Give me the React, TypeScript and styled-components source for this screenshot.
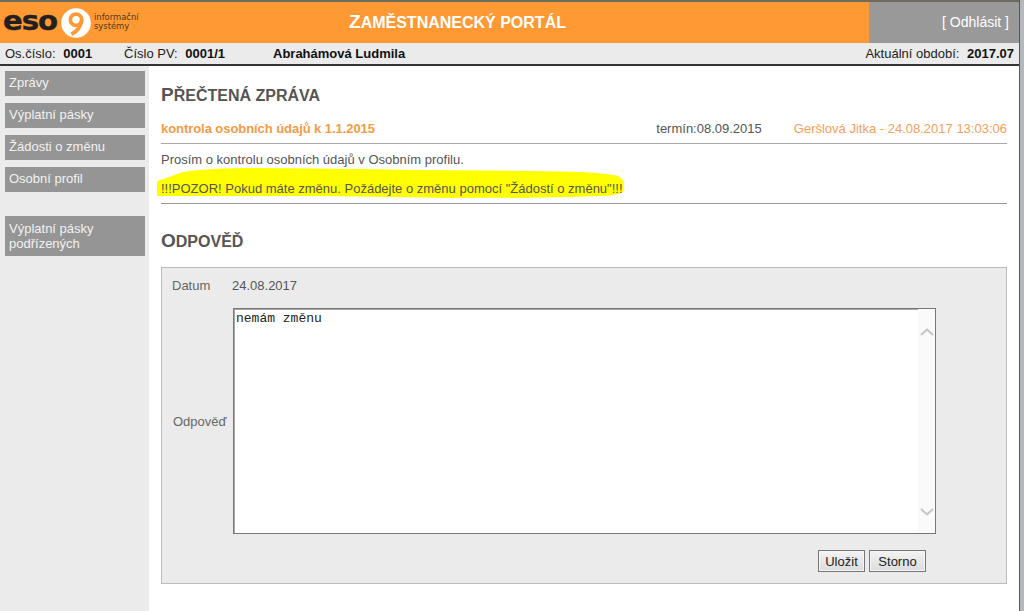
import React from "react";
import styled, { createGlobalStyle } from "styled-components";

const Global = createGlobalStyle`
  html, body { margin: 0; padding: 0; background: #fff; }
  body { font-family: "Liberation Sans", Arial, sans-serif; font-size: 13px; color: #555; }
  #root { width: 1024px; height: 611px; overflow: hidden; }
`;

const Page = styled.div`
  width: 1024px; height: 611px; display: flex; flex-direction: column;
  background: #b4b8bc; box-sizing: border-box; padding-right: 4px;
`;
const Frame = styled.div`
  flex: 1; display: flex; flex-direction: column; min-height: 0;
  border-right: 1px solid #555;
`;
const TopBar = styled.header`
  height: 41px; display: flex; border-top: 2px solid #6e6a5e; flex: none;
`;
const Brand = styled.div`
  flex: 1; background: #ff9933; display: flex; align-items: center; position: relative; min-width: 0;
`;
const LogoWord = styled.span`
  font-family: "DejaVu Sans", sans-serif; font-weight: 700; font-size: 27px; letter-spacing: -1px;
  color: #231f20; margin-left: 3px; line-height: 41px; width: 53px; flex: none; -webkit-text-stroke: 0.4px #231f20;
  transform: scaleX(1.08) translateY(-2px); transform-origin: left center;
`;
const LogoMark = styled.svg`
  width: 30px; height: 30px; margin-left: 5px; flex: none;
`;
const LogoSub = styled.span`
  font-family: "DejaVu Sans", sans-serif; font-size: 8.4px; line-height: 8.5px; color: #4a3a1c; margin-left: 3px;
  display: flex; flex-direction: column; margin-top: -2px; position: relative; z-index: 1;
`;
const PortalTitle = styled.div`
  position: absolute; left: 0; right: 0; top: 0; text-align: center; padding-left: 46px;
  font-size: 16px; font-weight: 700; text-transform: uppercase; line-height: 40px; color: #fff;
  &::first-letter { font-size: 19px; }
`;
const LogoutBox = styled.div`
  width: 150px; background: #999; color: #fff; font-size: 14px; display: flex; justify-content: flex-end;
  align-items: center; padding-right: 10px; box-sizing: border-box; padding-bottom: 2px;
`;
const InfoBar = styled.div`
  height: 23px; flex: none; box-sizing: border-box; background: #ebebeb; border-bottom: 2px solid #333;
  display: flex; align-items: center; color: #222; padding: 0 5px; font-size: 13px;
`;
const InfoItem = styled.span<{ $w?: number }>`
  ${p => (p.$w ? `width: ${p.$w}px;` : "")} flex: none; white-space: nowrap;
  b { color: #111; margin-left: 4px; }
`;
const InfoName = styled.b`
  color: #111; flex: 1;
`;
const Body = styled.div`
  flex: 1; display: flex; min-height: 0;
`;
const Side = styled.nav`
  width: 149px; flex: none; background: #ebebeb; padding-top: 5px; box-sizing: border-box;
  display: flex; flex-direction: column; gap: 7px;
`;
const MenuItem = styled.a<{ $gap?: boolean }>`
  display: block; width: 140px; margin-left: 5px; box-sizing: border-box; padding: 4px 4px;
  min-height: 25px; background: #959595; color: #f2f2f2; font-size: 13px; line-height: 15px;
  ${p => (p.$gap ? "margin-top: 17px; padding: 5px 4px 5px;" : "")}
`;
const Main = styled.main`
  flex: 1; background: #fff; padding: 0 12px; min-width: 0; display: flex; flex-direction: column;
`;
const Title = styled.h2<{ $top?: number }>`
  margin: ${p => p.$top ?? 18}px 0 0; font-size: 16px; line-height: 22px; font-weight: 700;
  text-transform: uppercase; color: #555;
  &::first-letter { font-size: 19px; }
`;
const MessageHead = styled.div`
  display: flex; margin-top: 12px; height: 24px; align-items: flex-start; border-bottom: 1px solid #aaa;
  line-height: 20px;
`;
const Subject = styled.b`
  color: #f59a45; flex: 1; letter-spacing: -0.06px;
`;
const Due = styled.span`
  color: #555; margin-right: 32px;
`;
const Author = styled.span`
  color: #f7a058;
`;
const MessageText = styled.div`
  position: relative; border-bottom: 1px solid #999; height: 59px; color: #555;
`;
const Highlight = styled.svg`
  position: absolute; left: -5px; top: 23px; width: 470px; height: 32px;
`;
const Para = styled.p<{ $top: number }>`
  position: relative; margin: ${p => p.$top}px 0 0; line-height: 15px;
`;
const Panel = styled.section`
  margin-top: 14px; height: 317px; box-sizing: border-box; background: #ebebeb; border: 1px solid #bbb;
  padding: 10px 10px 0 10px; position: relative; display: flex; flex-direction: column;
`;
const DateRow = styled.div`
  display: flex; line-height: 16px; color: #555;
`;
const RowLabel = styled.span`
  width: 60px; flex: none; color: #666;
`;
const AnswerRow = styled.div`
  display: flex; align-items: center; margin-top: 14px;
`;
const AnswerLabel = styled(RowLabel)`
  width: 61px; padding-left: 1px; box-sizing: border-box;
`;
const Area = styled.div`
  width: 703px; height: 226px; box-sizing: border-box; border: 1px solid #777;
  background: #fff; display: flex; justify-content: space-between; box-shadow: inset 1px 1px 0 #aaa;
`;
const AreaText = styled.div`
  font-family: "Liberation Mono", monospace; font-size: 13px; color: #222; padding: 2px 2px;
`;
const Scroll = styled.div`
  width: 17px; background: #fafafa; display: flex; flex-direction: column; justify-content: space-between;
  align-items: center; padding: 19px 0 17px;
  color: #c4c4c4;
`;
const Actions = styled.div`
  display: flex; justify-content: flex-end; gap: 4px; margin-top: 16px; padding-right: 70px;
`;
const Btn = styled.button<{ $w: number }>`
  width: ${p => p.$w}px; height: 22px; padding: 0; font: 13px "Liberation Sans", Arial, sans-serif; color: #222;
  background: linear-gradient(#f3f3f3, #dcdcdc); border: 1px solid #777; box-shadow: inset 0 0 0 1px #f6f6f6;
`;
const Chevron = ({ up }: { up?: boolean }) => (
  <svg width="14" height="8" viewBox="0 0 14 8" fill="none" stroke="currentColor" strokeWidth="2">
    <path d={up ? "M1 7 L7 1.5 L13 7" : "M1 1 L7 6.5 L13 1"} />
  </svg>
);

export default function App() {
  return (
    <Page>
      <Global />
      <Frame>
        <TopBar>
          <Brand>
            <LogoWord>eso</LogoWord>
            <LogoMark viewBox="0 0 32 32">
              <circle cx="16" cy="16" r="15.8" fill="#fff" />
              <path d="M11 28 C15 26 21 21 22 13" fill="none" stroke="#ff9933" strokeWidth="4" />
              <circle cx="16" cy="12.5" r="6" fill="none" stroke="#ff9933" strokeWidth="4" />
            </LogoMark>
            <LogoSub><span>informační</span><span>systémy</span></LogoSub>
            <PortalTitle>Zaměstnanecký portál</PortalTitle>
          </Brand>
          <LogoutBox>[ Odhlásit ]</LogoutBox>
        </TopBar>
        <InfoBar>
          <InfoItem $w={119}>Os.číslo: <b>0001</b></InfoItem>
          <InfoItem $w={149}>Číslo PV: <b>0001/1</b></InfoItem>
          <InfoName>Abrahámová Ludmila</InfoName>
          <InfoItem>Aktuální období: <b>2017.07</b></InfoItem>
        </InfoBar>
        <Body>
          <Side>
            <MenuItem>Zprávy</MenuItem>
            <MenuItem>Výplatní pásky</MenuItem>
            <MenuItem>Žádosti o změnu</MenuItem>
            <MenuItem>Osobní profil</MenuItem>
            <MenuItem $gap>Výplatní pásky podřízených</MenuItem>
          </Side>
          <Main>
            <Title>Přečtená zpráva</Title>
            <MessageHead>
              <Subject>kontrola osobních údajů k 1.1.2015</Subject>
              <Due>termín:08.09.2015</Due>
              <Author>Geršlová Jitka - 24.08.2017 13:03:06</Author>
            </MessageHead>
            <MessageText>
              <Highlight viewBox="0 0 470 32">
                <path
                  d="M1 29 L1 15 C2 13 4 13 8 12 C16 9 24 5 34 4 C50 2 72 1 94 1 C150 1 205 2 261 3 C316 3 372 4 427 5 C440 6 455 7 462 9 C465 11 467 13 468 15 L467 25 C462 28 452 29 444 29 C395 31 344 31 294 31 C244 30 194 29 144 29 L3 29 Z"
                  fill="#ffff00"
                />
              </Highlight>
              <Para $top={8}>Prosím o kontrolu osobních údajů v Osobním profilu.</Para>
              <Para $top={14}>!!!POZOR! Pokud máte změnu. Požádejte o změnu pomocí "Žádostí o změnu"!!!</Para>
            </MessageText>
            <Title $top={26}>Odpověď</Title>
            <Panel>
              <DateRow><RowLabel>Datum</RowLabel><span>24.08.2017</span></DateRow>
              <AnswerRow>
                <AnswerLabel>Odpověď</AnswerLabel>
                <Area>
                  <AreaText>nemám změnu</AreaText>
                  <Scroll><Chevron up /><Chevron /></Scroll>
                </Area>
              </AnswerRow>
              <Actions>
                <Btn $w={47}>Uložit</Btn>
                <Btn $w={57}>Storno</Btn>
              </Actions>
            </Panel>
          </Main>
        </Body>
      </Frame>
    </Page>
  );
}
